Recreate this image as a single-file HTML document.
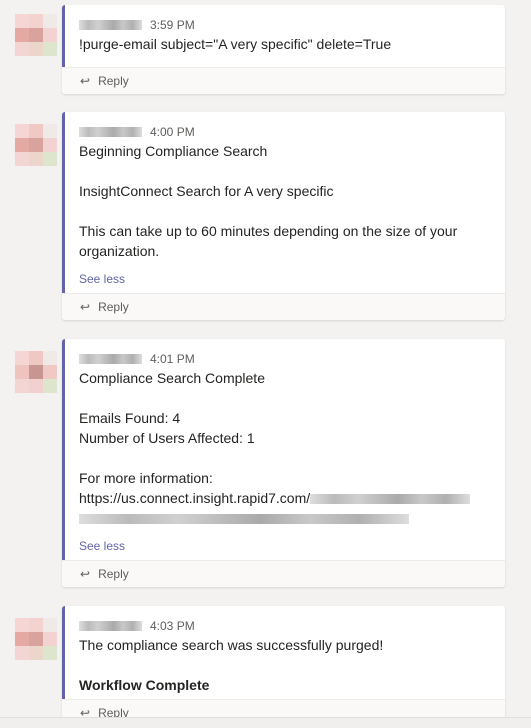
<!DOCTYPE html><html style="overflow:hidden;height:728px"><head><style>
body{margin:0;width:531px;height:728px;background:#f3f2f1;font-family:"Liberation Sans",sans-serif;position:relative;overflow:hidden;color:#252423}
.card{position:absolute;left:62px;width:443px;background:#fff;border-radius:3px;box-shadow:0 1px 2px rgba(0,0,0,.12);overflow:hidden}
.bar{position:absolute;left:0;top:0;width:3px;background:#6264a7}
.body{padding:11px 0 0 17px;font-size:14px;line-height:20px}
.hdr{font-size:12px;color:#605e5c;height:18px;line-height:18px}
.blur{display:inline-block;width:63px;height:10px;vertical-align:-1px;margin-right:8px;background:linear-gradient(90deg,#ddd 0,#bbb 15%,#d0d0d0 30%,#aaa 55%,#c8c8c8 70%,#b0b0b0 85%,#ddd 100%)}
.reply{border-top:1px solid #edebe9;background:#faf9f8;height:26px;line-height:26px;font-size:12px;color:#605e5c;padding-left:18px}
.reply span{margin-right:8px}
.see{color:#6264a7;font-size:12px}
.av{position:absolute;left:15px;width:42px;height:42px;display:grid;grid-template-columns:repeat(3,14px)}
.av i{display:block}
</style></head><body>
<div class="av" style="top:14px"><i style="background:#f5d6d4"></i><i style="background:#f3d2cf"></i><i style="background:#efe9e8"></i><i style="background:#e5a9a3"></i><i style="background:#d9a39d"></i><i style="background:#f3d3d1"></i><i style="background:#f3d5d3"></i><i style="background:#ecd6cc"></i><i style="background:#dde5cc"></i></div>
<div class="av" style="top:124px"><i style="background:#f5d6d4"></i><i style="background:#f0c8c4"></i><i style="background:#efe9e8"></i><i style="background:#e5a9a3"></i><i style="background:#d9a39d"></i><i style="background:#f3d3d1"></i><i style="background:#f3d5d3"></i><i style="background:#ecd6cc"></i><i style="background:#dde5cc"></i></div>
<div class="av" style="top:351px"><i style="background:#f5d6d4"></i><i style="background:#efc8c4"></i><i style="background:#efe9e8"></i><i style="background:#efc3bf"></i><i style="background:#c89690"></i><i style="background:#f0c8c4"></i><i style="background:#f3d5d3"></i><i style="background:#f3d0d0"></i><i style="background:#dde5cc"></i></div>
<div class="av" style="top:618px"><i style="background:#f5d6d4"></i><i style="background:#f3d2cf"></i><i style="background:#efe9e8"></i><i style="background:#e5a9a3"></i><i style="background:#d9a39d"></i><i style="background:#f3d3d1"></i><i style="background:#f3d5d3"></i><i style="background:#ecd6cc"></i><i style="background:#dde5cc"></i></div>

<div class="card" style="top:5px;height:89px"><div class="bar" style="height:62px"></div>
<div class="body" style="height:51px"><div class="hdr"><span class="blur"></span>3:59 PM</div>!purge-email subject="A very specific" delete=True</div>
<div class="reply"><span>↩</span>Reply</div></div>

<div class="card" style="top:112px;height:208px"><div class="bar" style="height:181px"></div>
<div class="body" style="height:170px"><div class="hdr"><span class="blur"></span>4:00 PM</div>Beginning Compliance Search<br><br>InsightConnect Search for A very specific<br><br>This can take up to 60 minutes depending on the size of your organization.<div class="see" style="margin-top:8px">See less</div></div>
<div class="reply"><span>↩</span>Reply</div></div>

<div class="card" style="top:339px;height:248px"><div class="bar" style="height:221px"></div>
<div class="body" style="height:210px"><div class="hdr"><span class="blur"></span>4:01 PM</div>Compliance Search Complete<br><br>Emails Found: 4<br>Number of Users Affected: 1<br><br>For more information:<br>https://us.connect.insight.rapid7.com/<span class="blur" style="width:160px;margin:0"></span><br><span class="blur" style="width:330px;margin:0"></span><div class="see" style="margin-top:8px">See less</div></div>
<div class="reply"><span>↩</span>Reply</div></div>

<div class="card" style="top:606px;height:112px"><div class="bar" style="height:93px"></div>
<div class="body" style="height:82px"><div class="hdr"><span class="blur"></span>4:03 PM</div>The compliance search was successfully purged!<br><br><b>Workflow Complete</b></div>
<div class="reply"><span>↩</span>Reply</div></div>
<div style="position:absolute;left:0;top:717px;width:531px;height:11px;background:#f0efee;border-top:1px solid #e1dfdd"></div>
</body></html>
